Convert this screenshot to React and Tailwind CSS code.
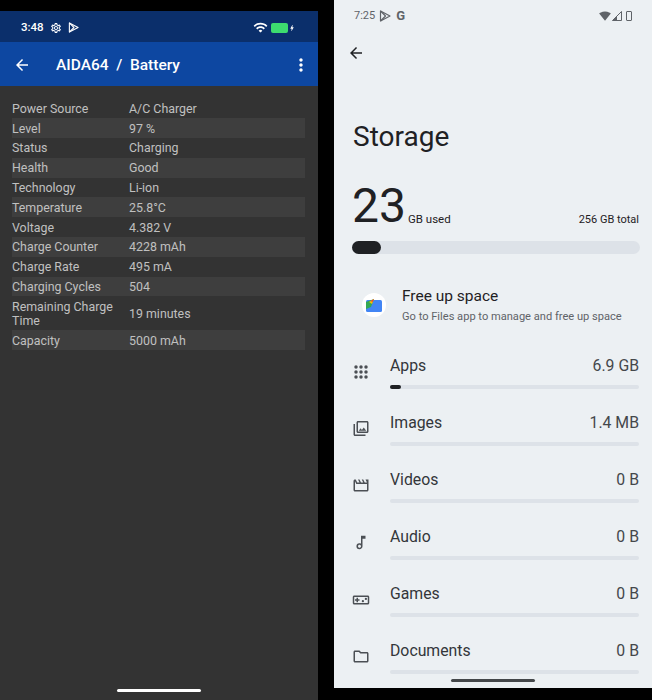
import React from 'react';
import {
  MdArrowBack,
  MdMoreVert,
  MdWifi,
  MdBolt,
  MdSignalWifi4Bar,
  MdOutlinePhotoLibrary,
  MdOutlineMovie,
  MdOutlineMusicNote,
  MdOutlineVideogameAsset,
  MdOutlineFolder,
  MdOutlineSettings,
} from 'react-icons/md';

const batteryRows = [
  ['Power Source', 'A/C Charger'],
  ['Level', '97 %'],
  ['Status', 'Charging'],
  ['Health', 'Good'],
  ['Technology', 'Li-ion'],
  ['Temperature', '25.8°C'],
  ['Voltage', '4.382 V'],
  ['Charge Counter', '4228 mAh'],
  ['Charge Rate', '495 mA'],
  ['Charging Cycles', '504'],
  ['Remaining Charge Time', '19 minutes'],
  ['Capacity', '5000 mAh'],
];

const AppsIcon = () => (
  <svg width="14" height="14" viewBox="0 0 14 14" fill="#4b4f54">
    {[2, 7, 12].map((y) =>
      [2, 7, 12].map((x) => <circle key={`${x}-${y}`} cx={x} cy={y} r="1.75" />)
    )}
  </svg>
);

const PlayIcon = ({ color, size = 12 }) => (
  <svg width={size} height={size} viewBox="0 0 12 12" fill="none" stroke={color} strokeWidth="1.2" strokeLinejoin="round">
    <path d="M1.5 1v10l9.5-5z" />
    <path d="M1.5 1l5 5-5 5" />
  </svg>
);

const storageRows = [
  { name: 'Apps', size: '6.9 GB', icon: <AppsIcon />, used: 11 },
  { name: 'Images', size: '1.4 MB', icon: <MdOutlinePhotoLibrary size={19} color="#4b4f54" /> },
  { name: 'Videos', size: '0 B', icon: <MdOutlineMovie size={19} color="#4b4f54" /> },
  { name: 'Audio', size: '0 B', icon: <MdOutlineMusicNote size={19} color="#4b4f54" /> },
  { name: 'Games', size: '0 B', icon: <MdOutlineVideogameAsset size={20} color="#4b4f54" /> },
  { name: 'Documents', size: '0 B', icon: <MdOutlineFolder size={19} color="#4b4f54" /> },
];

const BatteryScreen = () => (
  <div className="w-[318px] mt-[11px] flex flex-col bg-[#333333] text-[#c0c0c0]">
    <div className="h-[31px] shrink-0 bg-[#0b2f6b] flex items-center pl-[21px] pr-[22px] pt-[2px] text-white">
      <span className="text-[11.5px] font-medium">3:48</span>
      <MdOutlineSettings size={12} className="ml-[6px]" />
      <span className="ml-[6px] flex"><PlayIcon color="#ffffff" size={11} /></span>
      <MdWifi size={15} className="ml-auto" />
      <span className="ml-[3px] w-[17px] h-[10px] rounded-[2px] bg-[#3ddc6f]" />
      <MdBolt size={8} />
    </div>
    <div className="h-[44px] shrink-0 bg-[#0d47a1] flex items-center pl-[13px] pr-[7px] pt-[2px] text-white">
      <MdArrowBack size={18} />
      <span className="ml-[25px] pt-[2px] text-[15.5px] font-medium whitespace-pre">AIDA64  /  Battery</span>
      <MdMoreVert size={20} className="ml-auto" />
    </div>
    <div className="pt-[12.5px] pl-[12px] pr-[13px]">
      {batteryRows.map(([label, value], i) => (
        <div
          key={label}
          className={`flex items-center text-[12.4px] leading-[14px] pt-[3.3px] pb-[2.5px] ${i % 2 === 1 ? 'bg-[#3e3e3e]' : ''}`}
        >
          <span className="w-[117px] shrink-0 pr-[4px]">{label}</span>
          <span>{value}</span>
        </div>
      ))}
    </div>
    <div className="mt-auto mb-[8px] mx-auto w-[84px] h-[3px] rounded-full bg-white" />
  </div>
);

const StorageScreen = () => (
  <div className="relative w-[318px] h-[688px] ml-[16px] overflow-hidden bg-[#ecf0f3] text-[#1f2124]">
    <div className="h-[32px] flex items-center pl-[20px] pr-[20px] text-[#5f6368]">
      <span className="text-[11px]">7:25</span>
      <span className="ml-[4px] flex"><PlayIcon color="#5f6368" /></span>
      <span className="ml-[5px] text-[13px] font-bold">G</span>
      <MdSignalWifi4Bar size={12} className="ml-auto" />
      <svg width="10" height="10" viewBox="0 0 10 10" className="ml-[1px]">
        <path d="M9.5 0.5v9h-9z" fill="none" stroke="#5f6368" strokeWidth="1" />
        <path d="M5 5v4.5h-4.5z" fill="#5f6368" />
      </svg>
      <span className="ml-[4px] w-[6px] h-[10px] border border-[#5f6368] rounded-[1px]" />
    </div>
    <div className="pl-[13px] pt-[12px] h-[40px]">
      <MdArrowBack size={18} />
    </div>
    <h1 className="pl-[19px] mt-[48px] text-[28px] leading-[34px] font-normal">Storage</h1>
    <div className="mt-[26px] mx-[18px] flex items-baseline">
      <span className="text-[48px] leading-[52px]">23</span>
      <span className="ml-[2px] relative top-[1px] text-[11.5px]">GB used</span>
      <span className="ml-auto mr-[-5px] relative top-[1px] text-[11px]">256 GB total</span>
    </div>
    <div className="mt-[9px] ml-[18px] mr-[12px] h-[13px] rounded-full bg-[#dde2e8]">
      <div className="w-[29px] h-full rounded-full bg-[#1f2124]" />
    </div>
    <div className="mt-[32px] flex items-center pl-[28px]">
      <div className="w-[24px] h-[24px] rounded-full bg-white flex items-center justify-center">
        <svg width="16" height="13" viewBox="0 0 16 13">
          <rect x="0" y="1" width="16" height="12" rx="1.5" fill="#4285f4" />
          <path d="M0 3 L8 0 L5 8 L0 10z" fill="#34a853" />
          <path d="M3 3 L8 0 L6 5z" fill="#fbbc04" />
          <path d="M4.5 2 L8 0 L6.5 3z" fill="#ea4335" />
        </svg>
      </div>
      <div className="ml-[16px]">
        <div className="text-[15.5px] leading-[20px]">Free up space</div>
        <div className="mt-[3px] text-[11.1px] leading-[15px] text-[#5f6368]">Go to Files app to manage and free up space</div>
      </div>
    </div>
    <div className="mt-[31px] pr-[13px]">
      {storageRows.map((row) => (
        <div key={row.name} className="flex h-[57px]">
          <div className="w-[56px] h-[33px] shrink-0 flex justify-center items-center pl-[18px] pr-[20px]">{row.icon}</div>
          <div className="flex-1">
            <div className="flex justify-between items-center h-[22px] text-[15.8px] text-[#33363a]">
              <span>{row.name}</span>
              <span className="text-[#44474b]">{row.size}</span>
            </div>
            <div className="mt-[8px] h-[4px] rounded-full bg-[#dde2e8]">
              {row.used && <div className="h-full w-[11px] rounded-full bg-[#1f2124]" />}
            </div>
          </div>
        </div>
      ))}
    </div>
    <div className="absolute bottom-[6px] left-[117px] w-[84px] h-[3px] rounded-full bg-[#44474a]" />
  </div>
);

export default function App() {
  return (
    <div className="flex w-[652px] h-[700px] bg-black font-['Roboto',sans-serif] overflow-hidden">
      <BatteryScreen />
      <StorageScreen />
    </div>
  );
}
